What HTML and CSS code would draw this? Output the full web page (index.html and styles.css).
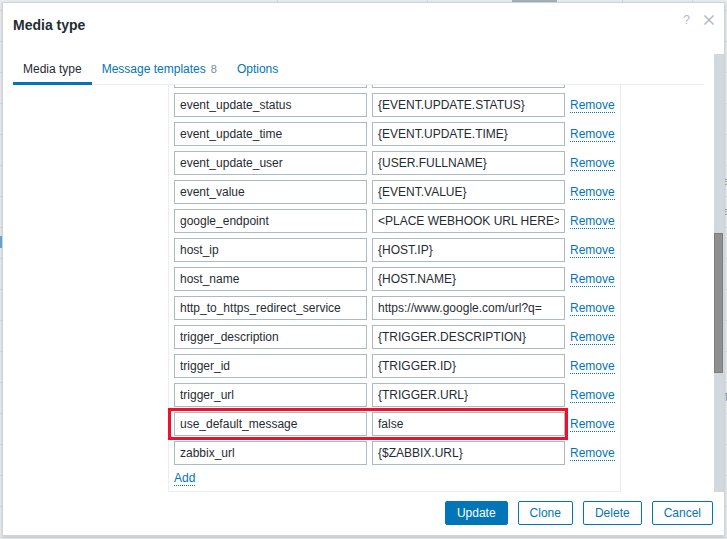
FILE: index.html
```html
<!DOCTYPE html>
<html>
<head>
<meta charset="utf-8">
<link rel="stylesheet" href="styles.css">
</head>
<body>
<div class="backdrop">
  <div class="bg-mark"></div>
  <div class="bg-tab"></div>
  <span class="bg-letter l1">a</span>
  <span class="bg-letter l2">a</span>
  <span class="bg-letter l3">T</span>
</div>
<div class="dialog">
  <div class="dlg-head">
    <h4 class="dlg-title">Media type</h4>
    <div class="head-btns">
      <span class="help">?</span>
      <svg class="close" width="12" height="12" viewBox="0 0 12 12"><path d="M1.5 1.5 L10.5 10.5 M10.5 1.5 L1.5 10.5" stroke="#acbbc2" stroke-width="1.5" fill="none"/></svg>
    </div>
  </div>
  <div class="dlg-body">
    <div class="main">
      <ul class="tabs">
        <li class="tab active"><a>Media type</a></li>
        <li class="tab"><a>Message templates<span class="count">8</span></a></li>
        <li class="tab"><a>Options</a></li>
      </ul>
      <div class="clip">
        <div class="params">
          <div class="prow"><input class="field" value="event_update_severity"><input class="field" value="{EVENT.UPDATE.SEVERITY}"><a class="link rm">Remove</a></div>
          <div class="prow"><input class="field" value="event_update_status"><input class="field" value="{EVENT.UPDATE.STATUS}"><a class="link rm">Remove</a></div>
          <div class="prow"><input class="field" value="event_update_time"><input class="field" value="{EVENT.UPDATE.TIME}"><a class="link rm">Remove</a></div>
          <div class="prow"><input class="field" value="event_update_user"><input class="field" value="{USER.FULLNAME}"><a class="link rm">Remove</a></div>
          <div class="prow"><input class="field" value="event_value"><input class="field" value="{EVENT.VALUE}"><a class="link rm">Remove</a></div>
          <div class="prow"><input class="field" value="google_endpoint"><input class="field" value="&lt;PLACE WEBHOOK URL HERE&gt;"><a class="link rm">Remove</a></div>
          <div class="prow"><input class="field" value="host_ip"><input class="field" value="{HOST.IP}"><a class="link rm">Remove</a></div>
          <div class="prow"><input class="field" value="host_name"><input class="field" value="{HOST.NAME}"><a class="link rm">Remove</a></div>
          <div class="prow"><input class="field" value="http_to_https_redirect_service"><input class="field" value="https://www.google.com/url?q="><a class="link rm">Remove</a></div>
          <div class="prow"><input class="field" value="trigger_description"><input class="field" value="{TRIGGER.DESCRIPTION}"><a class="link rm">Remove</a></div>
          <div class="prow"><input class="field" value="trigger_id"><input class="field" value="{TRIGGER.ID}"><a class="link rm">Remove</a></div>
          <div class="prow"><input class="field" value="trigger_url"><input class="field" value="{TRIGGER.URL}"><a class="link rm">Remove</a></div>
          <div class="prow"><input class="field" value="use_default_message"><input class="field" value="false"><a class="link rm">Remove</a></div>
          <div class="prow"><input class="field" value="zabbix_url"><input class="field" value="{$ZABBIX.URL}"><a class="link rm">Remove</a></div>
          <div class="add-row"><a class="link">Add</a></div>
        </div>
      </div>
    </div>
    <div class="scrollbar"><div class="thumb"></div></div>
  </div>
  <div class="dlg-foot">
    <button class="btn primary">Update</button>
    <button class="btn">Clone</button>
    <button class="btn">Delete</button>
    <button class="btn">Cancel</button>
  </div>
  <div class="highlight"></div>
</div>
</body>
</html>
```
FILE: styles.css
```css
html, body {
  margin: 0;
  padding: 0;
}
body {
  width: 727px;
  height: 539px;
  overflow: hidden;
  position: relative;
  font-family: "Liberation Sans", Arial, sans-serif;
  font-size: 12px;
  color: #1f2c33;
  background-color: #e9edf0;
  background-image: repeating-linear-gradient(to bottom, transparent 0, transparent 10px, #d8dee2 10px, #d8dee2 11px, transparent 11px, transparent 31px);
}
.backdrop {
  position: absolute;
  inset: 0;
  background-image:
    linear-gradient(to right, transparent 277px, #d0d8dc 277px, #d0d8dc 278px, transparent 278px, transparent 427px, #d0d8dc 427px, #d0d8dc 428px, transparent 428px, transparent 622px, #d0d8dc 622px, #d0d8dc 623px, transparent 623px, transparent 692px, #d0d8dc 692px, #d0d8dc 693px, transparent 693px);
  background-size: 727px 4px;
  background-repeat: no-repeat;
}
.bg-tab {
  position: absolute;
  left: 512px;
  top: 0;
  width: 45px;
  height: 3px;
  background: #a3b2ba;
}
.bg-mark {
  position: absolute;
  left: 0;
  top: 236px;
  width: 2px;
  height: 12px;
  background: #6aa9d6;
}
.bg-letter {
  position: absolute;
  left: 723px;
  font-size: 11px;
  color: #8d9aa2;
}
.l1 { top: 175px; }
.l2 { top: 205px; }
.l3 { top: 391px; }

.dialog {
  position: absolute;
  left: 2px;
  top: 2px;
  width: 721px;
  height: 532px;
  border: 1px solid #cdd5d9;
  background: #fff;
  box-shadow: 0 1px 3px rgba(0, 0, 0, 0.18);
  display: flex;
  flex-direction: column;
}
.dlg-head {
  height: 51px;
  box-sizing: border-box;
  padding: 13px 9px 0 10px;
  display: flex;
  align-items: flex-start;
  flex: none;
}
.dlg-title {
  margin: 0;
  font-size: 14px;
  line-height: 18px;
  font-weight: bold;
  color: #1f2c33;
}
.head-btns {
  margin-left: auto;
  display: flex;
  align-items: center;
  gap: 13px;
  margin-top: -3px;
}
.help {
  font-size: 12px;
  color: #acbbc2;
  line-height: 14px;
}
.close {
  display: block;
}
.dlg-body {
  display: flex;
  height: 438px;
  flex: none;
}
.main {
  width: 711px;
  display: flex;
  flex-direction: column;
}
.tabs {
  list-style: none;
  margin: 0 10px;
  padding: 0;
  display: flex;
  border-bottom: 1px solid #ebeef0;
  flex: none;
}
.tab {
  margin-bottom: -1px;
}
.tab a {
  display: block;
  padding: 8px 10px 6px;
  line-height: 14px;
  color: #0275b8;
  border-bottom: 3px solid transparent;
}
.tab.active a {
  color: #1f2c33;
  border-bottom-color: #0275b8;
}
.count {
  color: #768d99;
  font-size: 11px;
  margin-left: 5px;
}
.clip {
  flex: 1;
  overflow: hidden;
  padding-left: 165px;
}
.params {
  margin-top: -27px;
  border: 1px solid #ebeef0;
  padding: 5px;
  box-sizing: content-box;
  width: 441px;
  display: flex;
  flex-direction: column;
  gap: 5px;
}
.prow {
  display: flex;
  align-items: center;
  height: 24px;
  gap: 5px;
}
.field {
  width: 193px;
  height: 24px;
  box-sizing: border-box;
  border: 1px solid #acbbc2;
  padding: 0 5px;
  margin: 0;
  font-family: "Liberation Sans", Arial, sans-serif;
  font-size: 12px;
  color: #1f2c33;
  background: #fff;
  outline: none;
}
.link {
  color: #0275b8;
  line-height: 14px;
  border-bottom: 1px dotted #0275b8;
  cursor: pointer;
}
.rm {
  margin-top: 1px;
}
.add-row {
  height: 16px;
  display: flex;
  align-items: flex-start;
  padding-top: 1px;
  box-sizing: border-box;
}
.scrollbar {
  width: 10px;
  background: #d1d9de;
}
.thumb {
  margin-top: 179px;
  width: 9px;
  height: 140px;
  box-sizing: border-box;
  background: #8f8f8f;
  border: 1px solid #7d7d7d;
}
.dlg-foot {
  flex: none;
  display: flex;
  justify-content: flex-end;
  gap: 10px;
  padding: 9px 11px 10px 0;
}
.btn {
  height: 24px;
  box-sizing: border-box;
  padding: 0 11px;
  border: 1px solid #0275b8;
  border-radius: 2px;
  background: #fff;
  color: #0275b8;
  font-family: "Liberation Sans", Arial, sans-serif;
  font-size: 12px;
  line-height: 22px;
  margin: 0;
}
.btn.primary {
  background: #0275b8;
  color: #fff;
}
.highlight {
  position: absolute;
  left: 165px;
  top: 405px;
  width: 400px;
  height: 32px;
  box-sizing: border-box;
  border: 3px solid #f0102e;
}
```
